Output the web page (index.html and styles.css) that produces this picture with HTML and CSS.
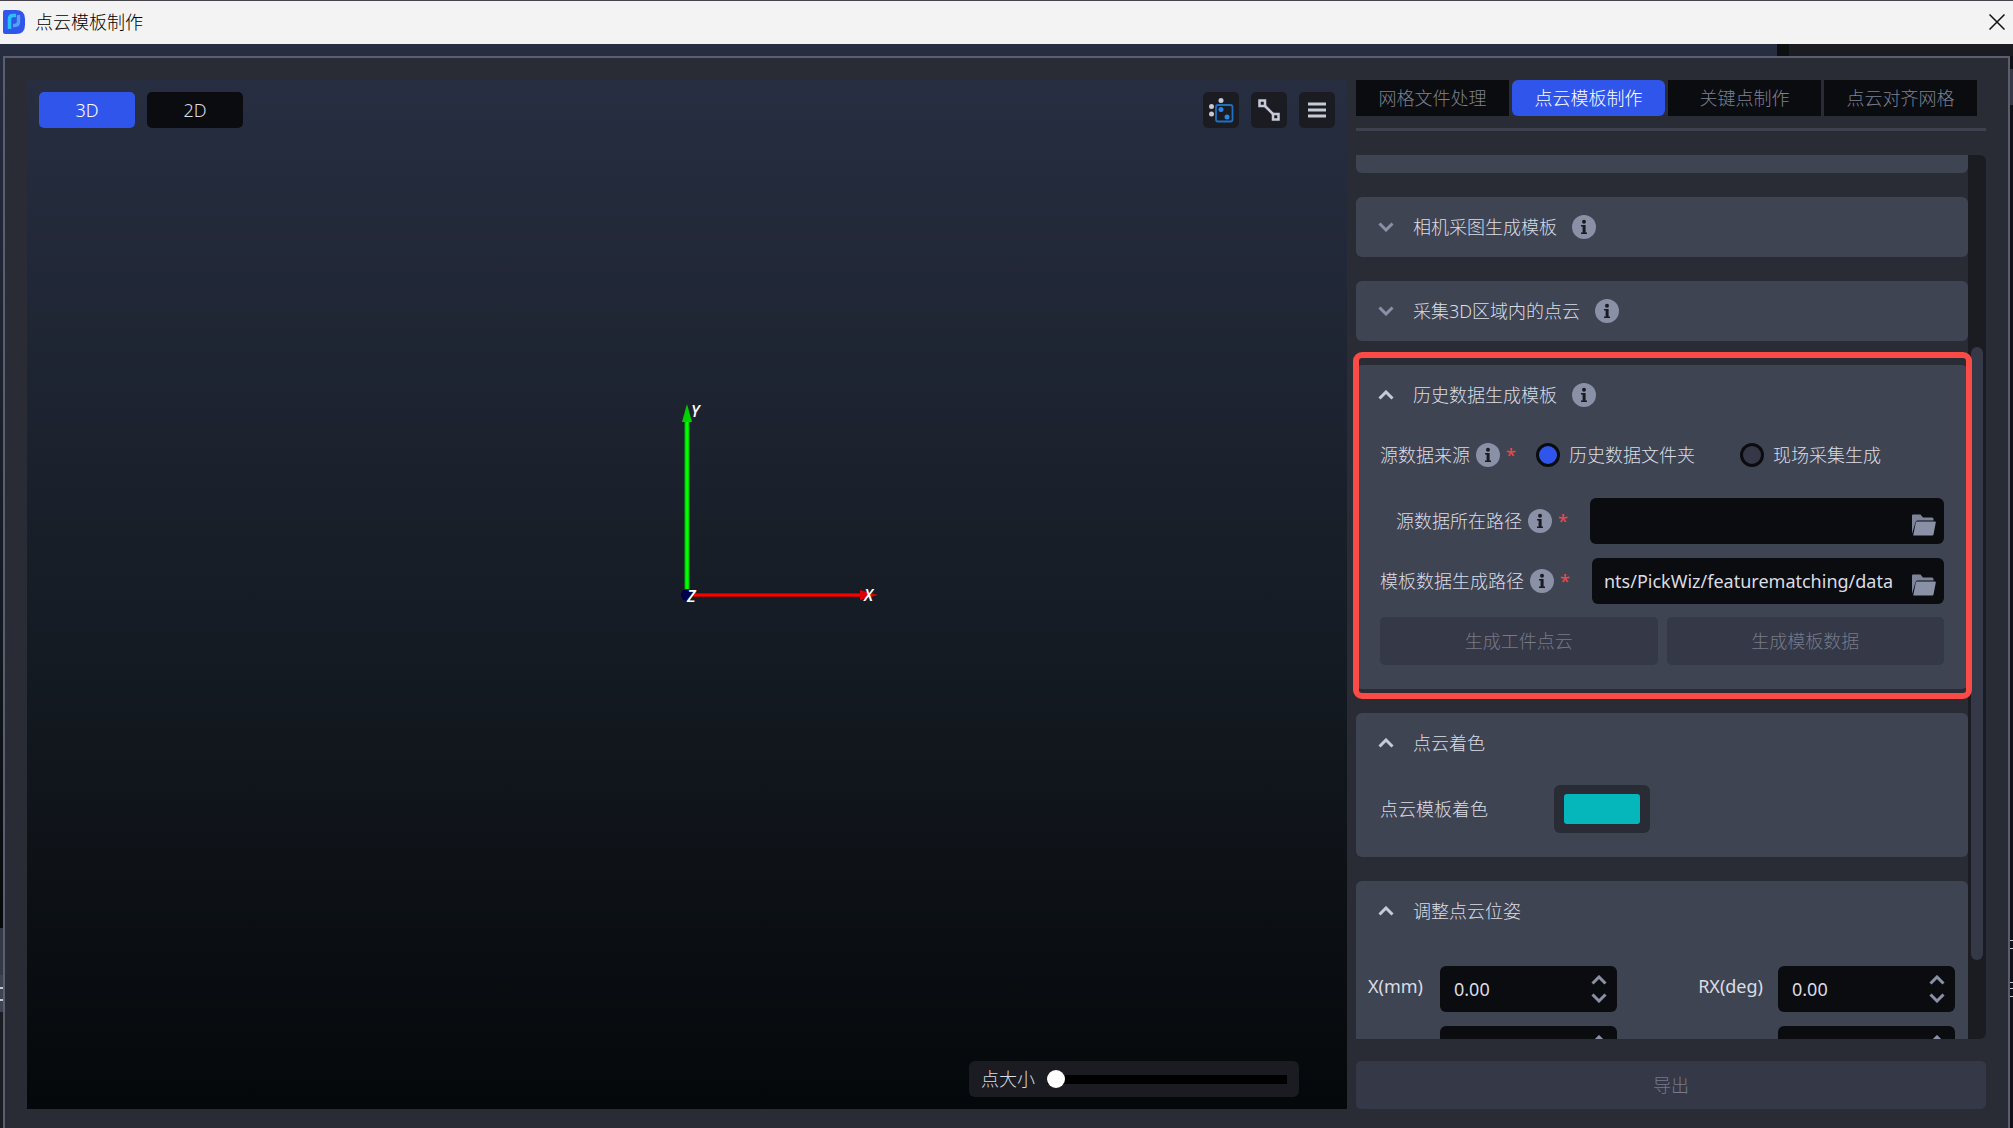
FILE: index.html
```html
<!DOCTYPE html>
<html lang="zh-CN">
<head>
    <meta charset="UTF-8">
    <meta name="viewport" content="width=device-width, initial-scale=1.0">
    <title>点云模板制作</title>
    <link rel="stylesheet" href="styles.css">
</head>
<body>
    <!-- shared icons -->
    <svg class="sprite" aria-hidden="true">
        <symbol id="i-info" viewBox="0 0 24 24">
            <circle cx="12" cy="12" r="12" fill="#8a90a5"/>
            <circle cx="12" cy="6.8" r="2" fill="#1b1c21"/>
            <path d="M9 10h4.6v7.4H15V19H9v-1.600h1.600v-5.800H9z" fill="#1b1c21"/>
        </symbol>
        <symbol id="i-down" viewBox="0 0 16 10">
            <path d="M1.500 1.500 8 8l6.500-6.500" fill="none" stroke="currentColor" stroke-width="3"/>
        </symbol>
        <symbol id="i-up" viewBox="0 0 16 10">
            <path d="M1.500 8.500 8 2l6.500 6.500" fill="none" stroke="currentColor" stroke-width="3"/>
        </symbol>
        <symbol id="i-folder" viewBox="0 0 24 22">
            <path d="M0 20V1.500Q0 .5 1 .5h7.500l2.500 3h9q1.500 0 1.500 1.500v1.500H5.500Q4 6.500 3.600 8z" fill="#7d8399"/>
            <path d="M5 7.500h18q1 0 .8 1l-2.300 12q-.2 1-1.200 1H1.200L3.800 8.500q.2-1 1.200-1z" fill="#8a90a5"/>
        </symbol>
    </svg>

    <header class="titlebar">
        <svg class="logo" width="22" height="24" viewBox="0 0 22 24">
            <path d="M2 0h11q9 0 9 9v6q0 9-9 9H2q-2 0-2-2V2q0-2 2-2z" fill="#2f55eb"/>
            <path d="M6.500 19V9q0-3.500 3.500-3.500h3" fill="none" stroke="#2bc0f5" stroke-width="3.600"/>
            <path d="M15.500 5v7q0 3.500-4 3.500H10" fill="none" stroke="#55a2f5" stroke-width="3.400"/>
        </svg>
        <h1>点云模板制作</h1>
        <button class="close" aria-label="关闭">
            <svg width="16" height="16" viewBox="0 0 16 16"><path d="M.5.5l15 15M15.500.5l-15 15" stroke="#111" stroke-width="1.500"/></svg>
        </button>
    </header>

    <main class="desktop">
        <div class="dialog">
            <section class="view">
                <div class="view-top">
                    <button class="mode active">3D</button>
                    <button class="mode">2D</button>
                    <div class="tools">
                        <button class="tool" aria-label="框选点云">
                            <svg width="36" height="36" viewBox="0 0 36 36">
                                <g fill="#c6cad6"><circle cx="18" cy="8.500" r="2.500"/><circle cx="8.500" cy="14.500" r="2.500"/><circle cx="8.500" cy="22" r="2.500"/></g>
                                <rect x="13" y="13" width="16.500" height="16.500" rx="2" fill="none" stroke="#1f6fc4" stroke-width="1.800"/>
                                <g fill="#2b86ec"><circle cx="18" cy="17.500" r="2.500"/><circle cx="24" cy="25" r="2.500"/></g>
                            </svg>
                        </button>
                        <button class="tool" aria-label="测量">
                            <svg width="36" height="36" viewBox="0 0 36 36" fill="none" stroke="#c6cad6">
                                <rect x="8.500" y="8.500" width="5.500" height="5.500" stroke-width="2.500"/>
                                <rect x="22" y="22" width="5.500" height="5.500" stroke-width="2.500"/>
                                <path d="M14 14l8 8" stroke-width="2.500"/>
                            </svg>
                        </button>
                        <button class="tool" aria-label="菜单">
                            <svg width="36" height="36" viewBox="0 0 36 36"><path d="M9 12h18M9 18h18M9 24h18" stroke="#c6cad6" stroke-width="3"/></svg>
                        </button>
                    </div>
                </div>

                <svg class="axes" width="200" height="220" viewBox="0 -10 200 220">
                    <path d="M7 188V18" stroke="#00b400" stroke-width="5"/>
                    <path d="M7 188V18" stroke="#0f0" stroke-width="3"/>
                    <path d="M7 1l5 18H2z" fill="#00d200"/>
                    <path d="M12 192h168" stroke="#b40000" stroke-width="4"/>
                    <path d="M12 192h168" stroke="#f00" stroke-width="2"/>
                    <path d="M198 192l-18 5v-10z" fill="#dc0000"/>
                    <circle cx="7" cy="192" r="6" fill="#00004b"/>
                    <text x="11" y="14">Y</text>
                    <text x="7" y="199">Z</text>
                    <text x="184" y="198">X</text>
                </svg>

                <div class="point-size">
                    <label for="psize">点大小</label>
                    <input type="range" id="psize" min="1" max="20" value="1">
                </div>
            </section>

            <aside class="side">
                <nav class="tabs">
                    <button>网格文件处理</button>
                    <button class="active">点云模板制作</button>
                    <button>关键点制作</button>
                    <button>点云对齐网格</button>
                </nav>

                <div class="scroll">
                    <div class="cards">
                        <section class="card card-cut"></section>

                        <section class="card">
                            <h2 class="closed"><svg class="chev"><use href="#i-down"/></svg>相机采图生成模板<svg class="info"><use href="#i-info"/></svg></h2>
                        </section>

                        <section class="card">
                            <h2 class="closed"><svg class="chev"><use href="#i-down"/></svg>采集3D区域内的点云<svg class="info"><use href="#i-info"/></svg></h2>
                        </section>

                        <section class="card history">
                            <h2><svg class="chev"><use href="#i-up"/></svg>历史数据生成模板<svg class="info"><use href="#i-info"/></svg></h2>
                            <div class="row source">
                                <span>源数据来源</span><svg class="info"><use href="#i-info"/></svg><span class="req">*</span>
                                <label><input type="radio" name="source" checked>历史数据文件夹</label>
                                <label><input type="radio" name="source">现场采集生成</label>
                            </div>
                            <div class="row path indent">
                                <label for="src">源数据所在路径</label><svg class="info"><use href="#i-info"/></svg><span class="req">*</span>
                                <div class="file">
                                    <input type="text" id="src">
                                    <button aria-label="浏览"><svg width="24" height="22"><use href="#i-folder"/></svg></button>
                                </div>
                            </div>
                            <div class="row path">
                                <label for="dst">模板数据生成路径</label><svg class="info"><use href="#i-info"/></svg><span class="req">*</span>
                                <div class="file">
                                    <input type="text" id="dst" value="nts/PickWiz/featurematching/data">
                                    <button aria-label="浏览"><svg width="24" height="22"><use href="#i-folder"/></svg></button>
                                </div>
                            </div>
                            <div class="actions">
                                <button class="btn" disabled>生成工件点云</button>
                                <button class="btn" disabled>生成模板数据</button>
                            </div>
                            <div class="highlight"></div>
                        </section>

                        <section class="card">
                            <h2><svg class="chev"><use href="#i-up"/></svg>点云着色</h2>
                            <div class="row color">
                                <span class="name">点云模板着色</span>
                                <button class="swatch" aria-label="选择颜色"><span></span></button>
                            </div>
                        </section>

                        <section class="card">
                            <h2><svg class="chev"><use href="#i-up"/></svg>调整点云位姿</h2>
                            <div class="pose">
                                <label for="x">X(mm)</label>
                                <div class="spin"><input type="text" id="x" value="0.00"><span class="arrows"><svg><use href="#i-up"/></svg><svg><use href="#i-down"/></svg></span></div>
                                <label for="rx" class="rot">RX(deg)</label>
                                <div class="spin"><input type="text" id="rx" value="0.00"><span class="arrows"><svg><use href="#i-up"/></svg><svg><use href="#i-down"/></svg></span></div>
                                <span></span>
                                <div class="spin"><input type="text" aria-label="Y"><span class="arrows"><svg><use href="#i-up"/></svg><svg><use href="#i-down"/></svg></span></div>
                                <span></span>
                                <div class="spin"><input type="text" aria-label="RY"><span class="arrows"><svg><use href="#i-up"/></svg><svg><use href="#i-down"/></svg></span></div>
                            </div>
                        </section>
                    </div>
                    <div class="bar"><div class="thumb"></div></div>
                </div>

                <button class="btn export" disabled>导出</button>
            </aside>
        </div>
    </main>
</body>
</html>
```
FILE: styles.css
```css
* { box-sizing: border-box; }
body { margin: 0; height: 100vh; overflow: hidden; display: flex; flex-direction: column; background: #1b1c21; color: #dadde5; font: 300 18px/24px "Noto Sans", "Noto Sans CJK SC", sans-serif; }
button, input { font: inherit; color: inherit; border: 0; padding: 0; margin: 0; }
button { cursor: pointer; }
h1, h2 { margin: 0; font-size: 18px; font-weight: 300; }
.sprite { position: absolute; width: 0; height: 0; }

/* window title */
.titlebar { display: flex; align-items: center; flex: none; height: 44px; padding: 0 8px 2px 3px; background: #f3f3f3; border-top: 1px solid #47434b; color: #000; }
.titlebar h1 { margin-left: 10px; flex: 1; }
.close { background: none; width: 16px; height: 16px; }
.close svg { display: block; }

/* slivers of the main window stay visible round the dialog */
.desktop {
    flex: 1; min-height: 0; display: flex; padding: 12px 3px 0;
    background:
        linear-gradient(#0e0f11, #0e0f11) calc(100% - 224px) 0 / 12px 12px no-repeat,
        linear-gradient(#1b1c21, #1b1c21) 100% 0 / 224px 12px no-repeat,
        linear-gradient(#272d40, #272d40) 0 0 / calc(100% - 236px) 12px no-repeat,
        linear-gradient(#c6cad6 2px, transparent 2px 12px, #c6cad6 12px 14px, #3f4453 14px) 0 calc(100% - 116px) / 3px 25px no-repeat,
        linear-gradient(#3f4453, #3f4453) 0 calc(100% - 116px) / 3px 37px no-repeat,
        linear-gradient(#353846, #353846) 0 calc(100% - 153px) / 3px 47px no-repeat,
        linear-gradient(#272d40, #151b23 50%, #05080a 84%, #1b1c21 84%) 0 0 / 3px 100% no-repeat,
        linear-gradient(#c6cad6 1px, transparent 1px 8px, #c6cad6 8px 9px, transparent 9px 42px, #c6cad6 42px 43px, transparent 43px 48px, #c6cad6 48px 49px, transparent 49px 56px, #c6cad6 56px) 100% calc(100% - 131px) / 3px 57px no-repeat,
        linear-gradient(#353846, #353846) 100% 25px / 3px 36px no-repeat,
        #101217;
}
.dialog { flex: 1; min-width: 0; display: flex; gap: 9px; padding: 22px 22px 19px; background: #2a2c35; border: 2px solid #5a5e6e; border-bottom: 0; }

/* 3D view */
.view { flex: 1; min-width: 0; position: relative; display: flex; flex-direction: column; justify-content: space-between; padding: 12px; background: linear-gradient(#272e41, #151b23 55%, #05080a); }
.view-top { display: flex; gap: 12px; }
.mode { width: 96px; height: 36px; border-radius: 5px; background: #0b0c10; }
.mode.active { background: #2f55eb; color: #fff; }
.tools { display: flex; gap: 12px; margin-left: auto; }
.tool { width: 36px; height: 36px; border-radius: 5px; background: #1b1c21; }
.tool svg { display: block; }
.axes { position: absolute; left: 50%; top: 50%; margin: -202px 0 0 -7px; }
.axes text { font: italic 600 16px "Open Sans", sans-serif; fill: #fff; }
.point-size { align-self: flex-end; display: flex; align-items: center; gap: 12px; width: 330px; height: 36px; margin-right: 36px; padding: 0 12px; border-radius: 6px; background: #1b1c21; }
.point-size input { flex: 1; min-width: 0; height: 18px; appearance: none; background: linear-gradient(#000, #000) 0 50% / 100% 9px no-repeat; border-radius: 5px; }
.point-size input::-webkit-slider-thumb { appearance: none; width: 18px; height: 18px; border-radius: 50%; background: #fff; }

/* right panel */
.side { width: 630px; flex: none; display: flex; flex-direction: column; }
.tabs { display: grid; grid-template-columns: repeat(4, 1fr); gap: 3px; padding: 0 9px 12px 0; border-bottom: 3px solid #3f4150; margin-bottom: 24px; }
.tabs button { height: 36px; background: #0b0c10; color: #7c8090; }
.tabs button.active { background: #2f55eb; color: #fff; border-radius: 6px; }

.scroll { flex: 1; min-height: 0; display: flex; margin-bottom: 22px; }
.cards { flex: 1; min-width: 0; height: 100%; display: flex; flex-direction: column; gap: 24px; position: relative; z-index: 1; clip-path: inset(0 -6px 0 -6px); }
.bar { flex: none; width: 18px; padding: 192px 3px 79px; background: #1b1c21; border-radius: 0 6px 6px 0; }
.thumb { height: 100%; border-radius: 6px; background: #353846; }

.card { flex: none; background: #3f4453; border-radius: 6px; }
.card-cut { height: 18px; border-radius: 0 0 6px 6px; }
.card h2 { display: flex; align-items: center; height: 60px; padding-left: 22px; }
.chev { width: 16px; height: 10px; margin-right: 19px; color: #c6cad6; }
.closed .chev { color: #8a90a5; }
.info { width: 24px; height: 24px; flex: none; }
h2 .info { margin-left: 15px; }
.row { display: flex; align-items: center; padding: 0 24px; }
.row .info { margin-left: 6px; }
.req { width: 8px; margin-left: 6px; color: #f04a4e; font-weight: 400; }

.history { position: relative; padding-bottom: 24px; }
.source { height: 60px; margin-bottom: 13px; }
.source label { display: flex; align-items: center; gap: 9px; margin-left: 22px; }
.source label + label { margin-left: 45px; }
.source input { appearance: none; width: 24px; height: 24px; border: 3px solid #0b0c10; border-radius: 50%; background: #353846; }
.source input:checked { background: #2f55eb; }
.path { margin-bottom: 14px; }
.path.indent { padding-left: 40px; }
.file { flex: 1; min-width: 0; display: flex; align-items: center; height: 46px; margin-left: 24px; padding: 0 8px 0 12px; border-radius: 6px; background: #0b0c10; }
.file input { flex: 1; min-width: 0; background: none; outline: 0; font-weight: 400; }
.file button { background: none; padding-top: 8px; }
.file svg { display: block; }
.btn { height: 48px; border-radius: 5px; background: #353846; color: #767a8a; cursor: default; }
.actions { display: grid; grid-template-columns: 1fr 1fr; gap: 9px; margin-top: -1px; padding: 0 24px; }
/* callout around the history section */
.highlight { position: absolute; inset: -13px -4px -10px -3px; border: 6px solid #fa4b46; border-radius: 9px; pointer-events: none; }

.color { height: 72px; margin-bottom: 12px; }
.color .name { width: 174px; }
.swatch { width: 96px; height: 48px; padding: 9px 10px; border-radius: 6px; background: #2a2c35; }
.swatch span { display: block; height: 30px; border-radius: 3px; background: #05b6bb; }

.pose { display: grid; grid-template-columns: 60px 177px 1fr 177px; column-gap: 12px; row-gap: 14px; padding: 25px 13px 24px 12px; font-weight: 400; }
.pose label { padding-top: 8px; }
.pose .rot { padding-right: 3px; text-align: right; }
.spin { display: flex; align-items: center; height: 46px; padding: 0 10px 0 14px; border-radius: 6px; background: #0b0c10; }
.spin input { flex: 1; min-width: 0; background: none; outline: 0; }
.arrows { display: flex; flex-direction: column; gap: 8px; color: #8a90a5; }
.arrows svg { width: 16px; height: 10px; }
```
